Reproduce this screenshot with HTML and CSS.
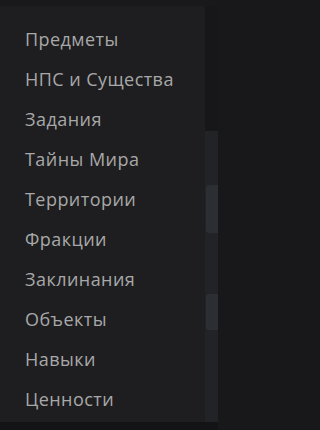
FILE: index.html
```html
<!DOCTYPE html>
<html lang="ru">
<head>
<meta charset="utf-8">
<link rel="stylesheet" href="styles.css">
</head>
<body>
<div class="top-strip"></div>
<div class="main">
  <nav class="menu">
    <a class="item">Предметы</a>
    <a class="item">НПС и Существа</a>
    <a class="item">Задания</a>
    <a class="item">Тайны Мира</a>
    <a class="item">Территории</a>
    <a class="item">Фракции</a>
    <a class="item">Заклинания</a>
    <a class="item">Объекты</a>
    <a class="item">Навыки</a>
    <a class="item">Ценности</a>
  </nav>
  <div class="behind">
    <div class="behind-dark"></div>
    <div class="behind-light">
      <div class="card card-1"></div>
      <div class="card card-2"></div>
    </div>
  </div>
</div>
<div class="bottom-strip"></div>
</body>
</html>
```
FILE: styles.css
```css
html, body {
  margin: 0;
  padding: 0;
  height: 430px;
  overflow: hidden;
  background: #18181a;
  font-family: "Open Sans", "Noto Sans", sans-serif;
}
body {
  width: 218px;
}
.top-strip {
  height: 6px;
  background: #19191b;
}
.main {
  display: flex;
  height: 416px;
}
.menu {
  width: 205px;
  flex: none;
  background: #1e1e20;
  border-top-right-radius: 4px;
  padding-top: 13px;
  box-sizing: border-box;
  display: flex;
  flex-direction: column;
}
.item {
  display: block;
  height: 40px;
  line-height: 40px;
  padding-left: 25px;
  font-size: 18px;
  letter-spacing: 0.45px;
  color: #a8a8a8;
  white-space: nowrap;
}
.behind {
  flex: 1;
  display: flex;
  flex-direction: column;
}
.behind-dark {
  height: 125px;
  background: #17171a;
}
.behind-light {
  flex: 1;
  background: #222327;
  padding-top: 54px;
  padding-left: 1px;
  display: flex;
  flex-direction: column;
}
.card {
  background: #2b2e32;
  border-radius: 3px 0 0 3px;
}
.card-1 {
  height: 48px;
}
.card-2 {
  height: 36px;
  margin-top: 61px;
}
.bottom-strip {
  height: 8px;
  background: #141416;
}
```
